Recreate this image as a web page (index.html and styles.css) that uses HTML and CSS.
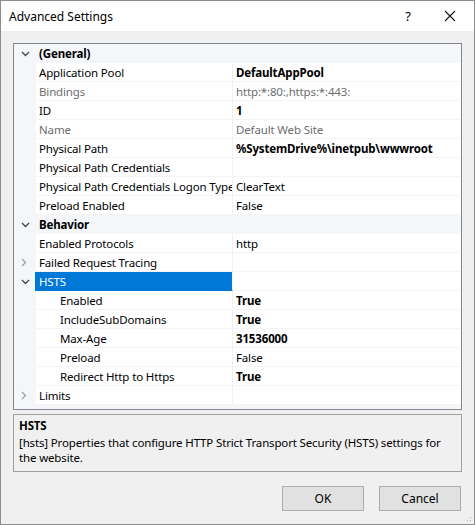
FILE: index.html
```html
<!DOCTYPE html>
<html>
<head>
<meta charset="utf-8">
<link rel="stylesheet" href="styles.css">
</head>
<body>
<div class="window">
  <div class="titlebar">
    <span class="title">Advanced Settings</span>
    <span class="tb-help">?</span>
    <span class="tb-close"><svg width="12" height="12" viewBox="0 0 12 12"><path d="M1 1L11 11M11 1L1 11" stroke="#111" stroke-width="1.1" fill="none"/></svg></span>
  </div>
  <div class="content">
    <div class="grid">
      <div class="row cat"><span class="margin"><svg class="chev" viewBox="0 0 9 6"><path d="M1 1L4.5 4.5L8 1" /></svg></span><span class="cname">(General)</span></div>
      <div class="row"><span class="margin"></span><span class="name">Application Pool</span><span class="val b">DefaultAppPool</span></div>
      <div class="row dis"><span class="margin"></span><span class="name">Bindings</span><span class="val">http:*:80:,https:*:443:</span></div>
      <div class="row"><span class="margin"></span><span class="name">ID</span><span class="val b">1</span></div>
      <div class="row dis"><span class="margin"></span><span class="name">Name</span><span class="val">Default Web Site</span></div>
      <div class="row"><span class="margin"></span><span class="name">Physical Path</span><span class="val b">%SystemDrive%\inetpub\wwwroot</span></div>
      <div class="row"><span class="margin"></span><span class="name">Physical Path Credentials</span><span class="val"></span></div>
      <div class="row"><span class="margin"></span><span class="name">Physical Path Credentials Logon Type</span><span class="val">ClearText</span></div>
      <div class="row"><span class="margin"></span><span class="name">Preload Enabled</span><span class="val">False</span></div>
      <div class="row cat"><span class="margin"><svg class="chev" viewBox="0 0 9 6"><path d="M1 1L4.5 4.5L8 1" /></svg></span><span class="cname">Behavior</span></div>
      <div class="row"><span class="margin"></span><span class="name">Enabled Protocols</span><span class="val">http</span></div>
      <div class="row"><span class="margin"><svg class="chev-r" viewBox="0 0 6 9"><path d="M1 1L4.5 4.5L1 8" /></svg></span><span class="name">Failed Request Tracing</span><span class="val"></span></div>
      <div class="row"><span class="margin"><svg class="chev" viewBox="0 0 9 6"><path d="M1 1L4.5 4.5L8 1" /></svg></span><span class="name sel">HSTS</span><span class="val"></span></div>
      <div class="row"><span class="margin"></span><span class="name sub">Enabled</span><span class="val b">True</span></div>
      <div class="row"><span class="margin"></span><span class="name sub">IncludeSubDomains</span><span class="val b">True</span></div>
      <div class="row"><span class="margin"></span><span class="name sub">Max-Age</span><span class="val b">31536000</span></div>
      <div class="row"><span class="margin"></span><span class="name sub">Preload</span><span class="val">False</span></div>
      <div class="row"><span class="margin"></span><span class="name sub">Redirect Http to Https</span><span class="val b">True</span></div>
      <div class="row"><span class="margin"><svg class="chev-r" viewBox="0 0 6 9"><path d="M1 1L4.5 4.5L1 8" /></svg></span><span class="name">Limits</span><span class="val"></span></div>
    </div>
    <div class="desc">
      <div class="desc-title">HSTS</div>
      <div class="desc-text">[hsts] Properties that configure HTTP Strict Transport Security (HSTS) settings for the website.</div>
    </div>
    <div class="buttons">
      <button class="btn">OK</button>
      <button class="btn">Cancel</button>
    </div>
  </div>
  <div class="grip"></div>
</div>
</body>
</html>
```
FILE: styles.css
```css
* { box-sizing: border-box; }
html, body { margin: 0; padding: 0; background: #f0f0f0; }
body { font-family: "Noto Sans", "Open Sans", sans-serif; font-size: 11.5px; letter-spacing: -0.15px; color: #000; }
.window {
  position: relative;
  width: 475px; height: 525px;
  border: 1px solid #8c8c8c;
  background: #f0f0f0;
  display: flex; flex-direction: column;
}
.titlebar {
  height: 30px; background: #fff;
  display: flex; align-items: center;
  padding-left: 8px;
}
.title { flex: 1; font-size: 12px; color: #000; letter-spacing: 0; }
.tb-help { width: 20px; margin-right: 26px; text-align: center; font-size: 13px; }
.tb-close { width: 14px; margin-right: 16px; display: flex; align-items: center; }
.content { padding: 12px 12px 0 12px; display: flex; flex-direction: column; }
.grid {
  height: 367px;
  border: 1px solid #82868e;
  background: #f4f6f9;
  display: flex; flex-direction: column;
  overflow: hidden;
}
.row { display: flex; height: 19px; line-height: 19px; white-space: nowrap; }
.margin {
  width: 22px; flex: none;
  display: flex; align-items: center; justify-content: center;
  padding-left: 1px;
}
.chev { width: 9px; height: 6px; }
.chev path { stroke: #444; stroke-width: 1.3; fill: none; }
.chev-r { width: 6px; height: 9px; margin-left: -3px; }
.chev-r path { stroke: #a0a0a0; stroke-width: 1.3; fill: none; }
.cname { font-weight: bold; padding-left: 3px; }
.name {
  width: 197px; flex: none;
  background: #fff;
  padding-left: 3px;
  overflow: hidden;
  border-right: 1px solid #f0f0f0;
  border-bottom: 1px solid #f4f4f4;
}
.name.sub { padding-left: 24px; }
.name.sel { background: #0078d7; color: #fff; margin-left: -1px; width: 198px; padding-left: 4px; border-bottom-color: #0078d7; }
.val {
  flex: 1; background: #fff;
  padding-left: 3px;
  border-bottom: 1px solid #f4f4f4;
}
.val.b { font-weight: bold; }
.dis .name, .dis .val { color: #6d6d6d; }
.desc {
  margin-top: 4px;
  height: 58px;
  border: 1px solid #a0a0a0;
  padding: 3px 5px 2px 5px;
  line-height: 15px;
}
.desc-title { font-weight: bold; margin-bottom: 2px; }
.buttons {
  margin-top: 14px;
  display: flex; justify-content: flex-end; gap: 15px;
  padding-right: 1px;
}
.btn {
  width: 82px; height: 25px;
  border: 1px solid #adadad;
  background: #e1e1e1;
  font-family: inherit; font-size: 12px; color: #000; letter-spacing: 0;
  padding: 0;
}
.grip {
  position: absolute; right: 1px; bottom: 1px;
  width: 10px; height: 10px;
  background-image: radial-gradient(circle, #b0b0b0 0.8px, transparent 1px);
  background-size: 3px 3px;
  clip-path: polygon(100% 0, 100% 100%, 0 100%);
}
```
